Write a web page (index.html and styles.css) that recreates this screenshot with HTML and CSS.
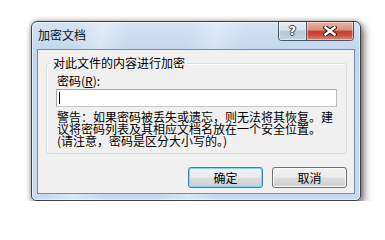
FILE: index.html
```html
<!DOCTYPE html>
<html lang="zh-CN">
<head>
<meta charset="utf-8">
<title>加密文档</title>
<link rel="stylesheet" href="styles.css">
</head>
<body>
<div class="window">
  <div class="titlebar">
    <span class="title">加密文档</span>
    <div class="caption-btns">
      <div class="cap help"><span class="qmark">?</span></div>
      <div class="cap close">
        <svg width="14" height="10" viewBox="0 0 14 10">
          <path d="M2.5 1.5 L11.5 8.5 M11.5 1.5 L2.5 8.5" stroke="#3a1f1a" stroke-width="4.6" stroke-linecap="square" fill="none"/>
          <path d="M2.5 1.5 L11.5 8.5 M11.5 1.5 L2.5 8.5" stroke="#ffffff" stroke-width="2.4" stroke-linecap="square" fill="none"/>
        </svg>
      </div>
    </div>
  </div>
  <div class="client">
    <div class="group">
      <span class="legend">对此文件的内容进行加密</span>
      <div class="label">密码(<u>R</u>):</div>
      <div class="input"><span class="caret"></span></div>
      <p class="warn">警告：如果密码被丢失或遗忘，则无法将其恢复。建<br>议将密码列表及其相应文档名放在一个安全位置。<br>(请注意，密码是区分大小写的。)</p>
    </div>
    <div class="buttons">
      <button class="btn default">确定</button>
      <button class="btn">取消</button>
    </div>
  </div>
</div>
</body>
</html>
```
FILE: styles.css
```css
* { box-sizing: border-box; }
html, body { margin: 0; background: #ffffff; }
body {
  padding: 21px 0 0 31px;
  font-family: "Noto Sans CJK SC", "Noto Sans", sans-serif;
  font-size: 12px;
  color: #000;
}
.window {
  width: 330px;
  height: 180px;
  border: 1px solid #3c4146;
  border-radius: 6px 6px 5px 5px;
  background:
    linear-gradient(100deg, rgba(255,255,255,0) 12%, rgba(255,255,255,0.35) 20%, rgba(255,255,255,0) 28%, rgba(255,255,255,0) 44%, rgba(255,255,255,0.3) 52%, rgba(255,255,255,0) 60%, rgba(255,255,255,0) 100%),
    linear-gradient(#d4e3f3, #c2d7ee 28px, #c6daef);
  box-shadow: inset 0 0 0 1px rgba(255,255,255,0.55), 3px 4px 9px rgba(0,0,0,0.55), 0 0 5px rgba(0,0,0,0.3);
  display: flex;
  flex-direction: column;
}
.titlebar {
  height: 27px;
  flex: none;
  display: flex;
  align-items: flex-start;
  padding: 0 6px 0 6px;
}
.title {
  margin-top: 6px;
  line-height: 14px;
  font-size: 12px;
  color: #111;
}
.caption-btns {
  margin-left: auto;
  display: flex;
  height: 19px;
  border: 1px solid #4a5768;
  border-top: none;
  border-radius: 0 0 4px 4px;
  overflow: hidden;
}
.cap {
  display: flex;
  align-items: center;
  justify-content: center;
  box-shadow: inset 0 0 0 1px rgba(255,255,255,0.45);
}
.help {
  width: 28px;
  border-right: 1px solid #4a5768;
  background: linear-gradient(#e6edf5 0%, #d6e0eb 45%, #bac9da 50%, #c3d2e2 100%);
}
.qmark {
  font-family: "DejaVu Sans", sans-serif;
  font-weight: bold;
  font-size: 12px;
  line-height: 12px;
  color: #fff;
  text-shadow: 1px 0 #2f3c4b, -1px 0 #2f3c4b, 0 1px #2f3c4b, 0 -1px #2f3c4b;
}
.close {
  width: 46px;
  background: linear-gradient(#eab3a7 0%, #de8d7d 45%, #c7412d 50%, #c84c37 72%, #de8b78 100%);
}
.client {
  margin: 0 5px;
  height: 145px;
  flex: none;
  border: 1px solid #7b8ea3;
  background: #f0f0f0;
  display: flex;
  flex-direction: column;
}
.group {
  margin: 13px 0 0 8px;
  width: 301px;
  height: 91px;
  flex: none;
  border: 1px solid #d5dfe5;
  border-radius: 3px;
  box-shadow: inset 1px 1px 0 #fbfbfb;
}
.legend {
  display: block;
  width: max-content;
  margin: -8px 0 0 4px;
  padding: 0 2px;
  line-height: 14px;
  background: #f0f0f0;
}
.label {
  margin: 4px 0 0 10px;
  line-height: 14px;
}
.label u { text-decoration-thickness: 1px; text-underline-offset: 1px; }
.input {
  margin: 1px 0 0 9px;
  width: 281px;
  height: 18px;
  border: 1px solid #a3a3a3;
  border-right-color: #bcbcbc;
  border-bottom-color: #c6c6c6;
  background: #fff;
  padding: 2px 0 0 2px;
}
.caret {
  display: block;
  width: 1px;
  height: 12px;
  background: #000;
}
.warn {
  margin: 4px 0 0 10px;
  line-height: 12px;
  white-space: nowrap;
}
.buttons {
  display: flex;
  justify-content: flex-end;
  gap: 9px;
  margin: 13px 7px 0 0;
}
.btn {
  width: 75px;
  height: 21px;
  padding: 0;
  border: 1px solid #707070;
  border-radius: 3px;
  background: linear-gradient(#f2f2f2 0%, #ebebeb 48%, #dddddd 52%, #cfcfcf 100%);
  box-shadow: inset 0 0 0 1px #fbfbfb;
  font-family: "Noto Sans CJK SC", "Noto Sans", sans-serif;
  font-size: 12px;
  line-height: 17px;
  color: #000;
}
.btn.default {
  border-color: #3c7fb1;
  box-shadow: inset 0 0 0 1px #7fd6f7;
}
```
